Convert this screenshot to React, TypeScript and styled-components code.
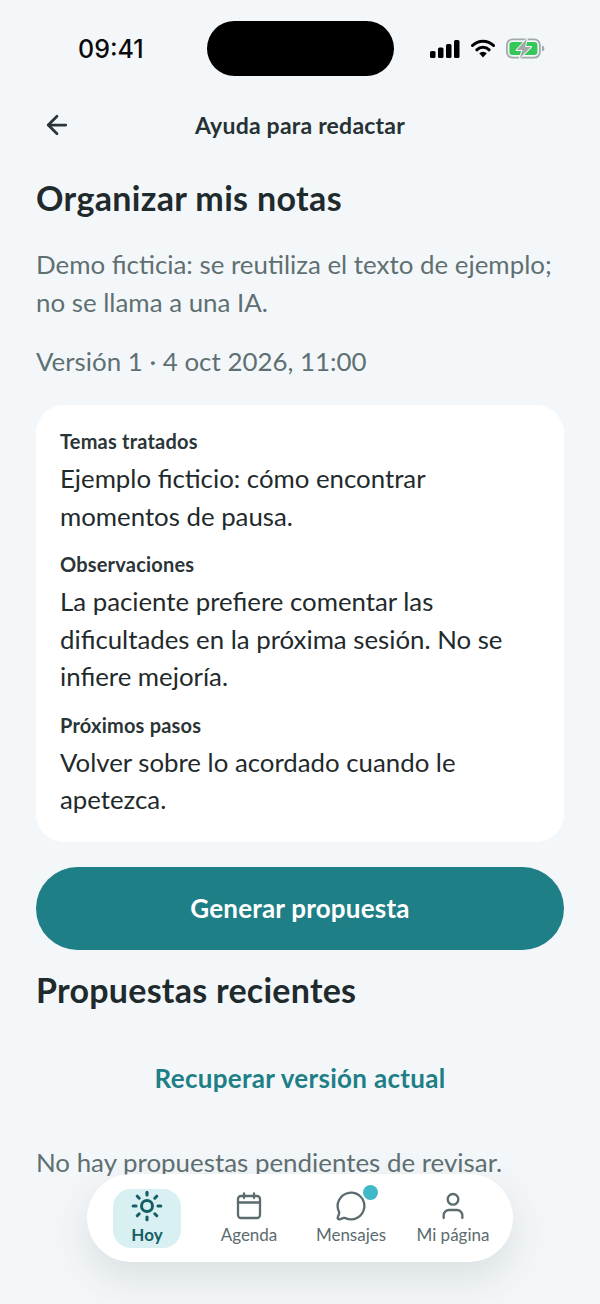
import styled, { createGlobalStyle } from "styled-components";
import { ArrowLeft, MessageCircle, User } from "lucide-react";

const GlobalStyle = createGlobalStyle`
    html, body {
        margin: 0;
        padding: 0;
        background-color: #f4f7f9;
    }
    * {
        box-sizing: border-box;
    }
`;

const Screen = styled.div`
    position: relative;
    width: 600px;
    height: 1304px;
    overflow: hidden;
    background-color: #f4f7f9;
    font-family: "Lato", "Noto Sans", sans-serif;
    color: #1f2a2c;
`;

const StatusBar = styled.div`
    display: flex;
    align-items: center;
    height: 55px;
    margin-top: 21px;
    padding-left: 78px;
`;

const Clock = styled.div`
    width: 129px;
    font-family: "Inter", sans-serif;
    font-size: 25px;
    font-weight: 500;
    color: #0a0a0a;
`;

const Island = styled.div`
    width: 187px;
    height: 55px;
    border-radius: 28px;
    background-color: #000;
`;

const StatusIcons = styled.div`
    display: flex;
    align-items: center;
    gap: 11px;
    margin-left: 36px;
`;

const Header = styled.div`
    position: relative;
    display: flex;
    align-items: center;
    justify-content: center;
    height: 40px;
    margin-top: 29px;
`;

const BackButton = styled.div`
    position: absolute;
    left: 42px;
    top: 5px;
    display: flex;
    color: #2b3538;
`;

const HeaderTitle = styled.div`
    font-size: 23px;
    font-weight: 700;
    letter-spacing: 0.22px;
    color: #263134;
`;

const Content = styled.div`
    display: flex;
    flex-direction: column;
    padding: 0 36px;
`;

const PageTitle = styled.h1`
    margin: 31px 0 0;
    font-size: 34px;
    line-height: 44px;
    font-weight: 700;
    letter-spacing: 0.35px;
    color: #1f2a2c;
`;

const Intro = styled.p`
    margin: 25px 0 0;
    font-size: 25.9px;
    line-height: 38px;
    color: #5f7072;
`;

const Version = styled.p`
    margin: 21px 0 0;
    font-size: 25.9px;
    line-height: 38px;
    color: #5f7072;
`;

const NoteCard = styled.div`
    display: flex;
    flex-direction: column;
    margin-top: 25px;
    padding: 22px 24px 23px;
    border-radius: 28px;
    background-color: #ffffff;
`;

const SectionLabel = styled.div<{ $first?: boolean }>`
    margin-top: ${(p) => (p.$first ? "0" : "15px")};
    margin-bottom: 5px;
    font-size: 20px;
    line-height: 28px;
    font-weight: 700;
    letter-spacing: 0.2px;
    color: #2b3538;
`;

const SectionText = styled.div`
    font-size: 25.8px;
    line-height: 37.5px;
    color: #1f2a2c;
`;

const PrimaryButton = styled.div`
    display: flex;
    align-items: center;
    justify-content: center;
    height: 83px;
    margin-top: 25px;
    border-radius: 42px;
    background-color: #1f7f86;
    font-size: 26px;
    font-weight: 700;
    letter-spacing: 0.2px;
    color: #ffffff;
`;

const SectionTitle = styled.h2`
    margin: 18px 0 0;
    font-size: 34px;
    line-height: 44px;
    font-weight: 700;
    letter-spacing: 0.25px;
    color: #1f2a2c;
`;

const LinkButton = styled.div`
    margin-top: 48px;
    text-align: center;
    font-size: 26px;
    line-height: 36px;
    font-weight: 700;
    letter-spacing: 0.3px;
    color: #1f7f86;
`;

const EmptyText = styled.p`
    margin: 47px 0 0;
    font-size: 25.9px;
    line-height: 38px;
    color: #5f7072;
`;

const TabBar = styled.div`
    position: absolute;
    left: 87px;
    top: 1174px;
    display: grid;
    grid-template-columns: repeat(4, 102px);
    align-items: center;
    width: 426px;
    height: 88px;
    padding: 1px 9px 0;
    border-radius: 44px;
    background-color: #ffffff;
    box-shadow: 0 16px 40px rgba(40, 60, 70, 0.13);
`;

const Tab = styled.div`
    display: flex;
    justify-content: center;
`;

const TabItem = styled.div<{ $active?: boolean }>`
    position: relative;
    display: flex;
    flex-direction: column;
    align-items: center;
    gap: 3px;
    width: 68px;
    height: 59px;
    padding-top: 1px;
    border-radius: 18px;
    background-color: ${(p) => (p.$active ? "#d8f0f2" : "transparent")};
    color: ${(p) => (p.$active ? "#165e66" : "#5b6b6e")};
`;

const TabLabel = styled.div<{ $active?: boolean }>`
    font-size: 17px;
    line-height: 20px;
    white-space: nowrap;
    font-weight: ${(p) => (p.$active ? 700 : 400)};
`;

const Badge = styled.div`
    position: absolute;
    top: -4px;
    left: 45.5px;
    width: 15px;
    height: 15px;
    border-radius: 50%;
    background-color: #3fb9c7;
`;

function SignalIcon() {
    return (
        <svg width="30" height="18" viewBox="0 0 30 18">
            <rect x="0" y="11" width="5.5" height="7" rx="1.5" fill="#000" />
            <rect x="8" y="7.5" width="5.5" height="10.5" rx="1.5" fill="#000" />
            <rect x="16" y="4" width="5.5" height="14" rx="1.5" fill="#000" />
            <rect x="24" y="0" width="5.5" height="18" rx="1.5" fill="#000" />
        </svg>
    );
}

function WifiIcon() {
    return (
        <svg width="24" height="19" viewBox="0 0 24 19" fill="none">
            <path d="M1.5 6.5a15 15 0 0 1 21 0" stroke="#000" strokeWidth="3" strokeLinecap="round" />
            <path d="M5.8 10.8a9 9 0 0 1 12.4 0" stroke="#000" strokeWidth="3" strokeLinecap="round" />
            <path d="M8.2 14.2 12 18.5l3.8-4.3a5.4 5.4 0 0 0-7.6 0z" fill="#000" />
        </svg>
    );
}

function BatteryIcon() {
    return (
        <svg width="39" height="21" viewBox="0 0 39 21" fill="none">
            <rect x="0.9" y="1.4" width="33" height="18.2" rx="5.5" stroke="#a3a8a8" strokeWidth="1.8" />
            <rect x="3.4" y="3.9" width="28" height="13.2" rx="3" fill="#35c759" />
            <path d="M36 7.5c1.6.4 2.4 1.6 2.4 3s-.8 2.6-2.4 3z" fill="#a3a8a8" />
            <path d="M21 0.8 10.5 12h6l-3 8.4L25 9h-6z" fill="#a3a8a8" stroke="#f4f7f9" strokeWidth="1.8" strokeLinejoin="round" paintOrder="stroke" />
        </svg>
    );
}

function SunIcon() {
    const rays = [0, 45, 90, 135, 180, 225, 270, 315];
    return (
        <svg width="32" height="32" viewBox="0 0 32 32" fill="none" stroke="currentColor">
            <circle cx="16" cy="16" r="5.5" strokeWidth="3" />
            {rays.map((angle) => (
                <line
                    key={angle}
                    x1="16"
                    y1="5"
                    x2="16"
                    y2="2.2"
                    strokeWidth="3.1"
                    strokeLinecap="round"
                    transform={`rotate(${angle} 16 16)`}
                />
            ))}
        </svg>
    );
}

function CalendarIcon() {
    return (
        <svg width="32" height="32" viewBox="0 0 32 32" fill="none" stroke="currentColor" strokeWidth="2.3" strokeLinecap="round">
            <rect x="5" y="6" width="22" height="22" rx="3" />
            <path d="M5 12.5h22" />
            <path d="M11 3.5v4.5" />
            <path d="M21 3.5v4.5" />
        </svg>
    );
}

export default function App() {
    return (
        <Screen>
            <GlobalStyle />
            <StatusBar>
                <Clock>09:41</Clock>
                <Island />
                <StatusIcons>
                    <SignalIcon />
                    <WifiIcon />
                    <BatteryIcon />
                </StatusIcons>
            </StatusBar>
            <Header>
                <BackButton>
                    <ArrowLeft size={30} strokeWidth={2.2} />
                </BackButton>
                <HeaderTitle>Ayuda para redactar</HeaderTitle>
            </Header>
            <Content>
                <PageTitle>Organizar mis notas</PageTitle>
                <Intro>Demo ficticia: se reutiliza el texto de ejemplo; no se llama a una IA.</Intro>
                <Version>Versión 1 · 4 oct 2026, 11:00</Version>
                <NoteCard>
                    <SectionLabel $first>Temas tratados</SectionLabel>
                    <SectionText>Ejemplo ficticio: cómo encontrar momentos de pausa.</SectionText>
                    <SectionLabel>Observaciones</SectionLabel>
                    <SectionText>La paciente prefiere comentar las dificultades en la próxima sesión. No se infiere mejoría.</SectionText>
                    <SectionLabel>Próximos pasos</SectionLabel>
                    <SectionText>Volver sobre lo acordado cuando le apetezca.</SectionText>
                </NoteCard>
                <PrimaryButton>Generar propuesta</PrimaryButton>
                <SectionTitle>Propuestas recientes</SectionTitle>
                <LinkButton>Recuperar versión actual</LinkButton>
                <EmptyText>No hay propuestas pendientes de revisar.</EmptyText>
            </Content>
            <TabBar>
                <Tab>
                    <TabItem $active>
                        <SunIcon />
                        <TabLabel $active>Hoy</TabLabel>
                    </TabItem>
                </Tab>
                <Tab>
                    <TabItem>
                        <CalendarIcon />
                        <TabLabel>Agenda</TabLabel>
                    </TabItem>
                </Tab>
                <Tab>
                    <TabItem>
                        <MessageCircle size={32} strokeWidth={1.75} />
                        <TabLabel>Mensajes</TabLabel>
                        <Badge />
                    </TabItem>
                </Tab>
                <Tab>
                    <TabItem>
                        <User size={32} strokeWidth={1.75} />
                        <TabLabel>Mi página</TabLabel>
                    </TabItem>
                </Tab>
            </TabBar>
        </Screen>
    );
}
